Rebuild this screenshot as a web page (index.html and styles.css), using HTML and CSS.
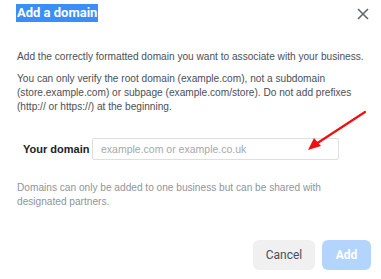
FILE: index.html
```html
<!DOCTYPE html>
<html>
<head>
<meta charset="utf-8">
<link rel="stylesheet" href="styles.css">
</head>
<body>
<div class="dialog">
  <div class="header">
    <h1 class="title">Add a domain</h1>
    <button class="close" aria-label="Close">
      <svg width="12" height="12" viewBox="0 0 12 12"><path d="M1 1L11 11M11 1L1 11" stroke="#606770" stroke-width="1.6" fill="none"/></svg>
    </button>
  </div>
  <div class="body">
    <p class="para">Add the correctly formatted domain you want to associate with your business.</p>
    <p class="para">You can only verify the root domain (example.com), not a subdomain (store.example.com) or subpage (example.com/store). Do not add prefixes (http:// or https://) at the beginning.</p>
    <div class="field">
      <label class="label">Your domain</label>
      <div class="input">example.com or example.co.uk</div>
    </div>
    <p class="note">Domains can only be added to one business but can be shared with designated partners.</p>
  </div>
  <div class="footer">
    <button class="btn cancel">Cancel</button>
    <button class="btn add">Add</button>
  </div>
  <svg class="arrow" width="70" height="50" viewBox="0 0 70 50">
    <line x1="65" y1="3" x2="16" y2="35" stroke="#f01010" stroke-width="2.2" stroke-linecap="round"/>
    <polygon points="8,41 14,29 21,37" fill="#f01010"/>
  </svg>
</div>
</body>
</html>
```
FILE: styles.css
```css
* { box-sizing: border-box; }
html, body { margin: 0; padding: 0; background: #fff; }
body { font-family: "Liberation Sans", Arial, sans-serif; }
.dialog { position: relative; width: 381px; height: 279px; }
.header { display: flex; justify-content: space-between; align-items: flex-start; padding: 4px 12px 0 16px; height: 50px; }
.title { margin: 0; font-family: Roboto, "Liberation Sans", sans-serif; font-size: 13px; font-weight: bold; line-height: 18px; color: #fff; background: #3b8ef8; padding: 0 1px; }
.close { border: 0; background: none; padding: 0; margin-top: 4px; width: 12px; height: 12px; display: flex; }
.body { padding: 0 8px 0 17px; color: #4b4f56; font-size: 10.15px; line-height: 14px; }
.para { margin: 0 0 8px; }
.field { display: flex; align-items: center; margin: 24px 0 0 6px; }
.label { font-weight: bold; font-size: 11px; color: #1d2129; width: 69px; flex: none; white-space: nowrap; }
.input { width: 247px; height: 22px; border: 1px solid #dddfe2; border-radius: 2px; color: #a4a7ab; font-size: 10.5px; line-height: 20px; padding-left: 8px; }
.note { margin: 21px 0 0; color: #90949c; max-width: 315px; }
.footer { display: flex; justify-content: flex-end; gap: 7px; padding: 0 10px; margin-top: 31px; }
.btn { border: 0; border-radius: 6px; height: 30px; font-family: Roboto, "Liberation Sans", sans-serif; font-size: 12px; }
.cancel { width: 62px; background: #f0f0f0; color: #4b4f56; }
.add { width: 49px; background: #b3d5fd; color: #fff; font-weight: bold; }
.arrow { position: absolute; left: 300px; top: 109px; }
```
